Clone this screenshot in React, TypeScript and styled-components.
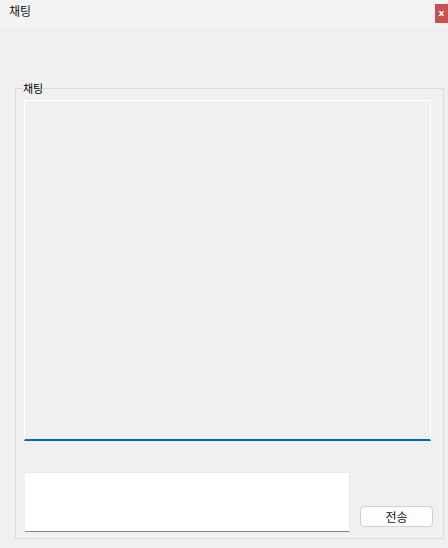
import React from "react";
import styled, { createGlobalStyle } from "styled-components";

const Global = createGlobalStyle`
  html, body { margin: 0; padding: 0; background: #f0f0f0; }
  body { font-family: "Noto Sans CJK KR", "Noto Sans", sans-serif; color: #000; }
  * { box-sizing: border-box; }
`;

const Window = styled.div`
  width: 448px;
  height: 548px;
  display: flex;
  flex-direction: column;
  background: #f0f0f0;
`;

const TitleBar = styled.div`
  height: 27px;
  flex: none;
  display: flex;
  justify-content: space-between;
  align-items: flex-start;
  background: #f3f3f3;
`;

const Title = styled.span`
  margin: 3px 0 0 9px;
  font-size: 12px;
  line-height: 16px;
  color: #111;
`;

const CloseButton = styled.button`
  margin-top: 4px;
  width: 13px;
  height: 19px;
  padding: 0;
  border: none;
  background: #c75050;
  color: #fff;
  font-family: "DejaVu Sans", sans-serif;
  font-size: 9px;
  font-weight: bold;
  line-height: 19px;
  text-align: center;
`;

const Body = styled.div`
  flex: 1;
  display: flex;
  flex-direction: column;
  padding: 55px 4px 9px 15px;
`;

const Group = styled.fieldset`
  flex: 1;
  margin: 0;
  min-width: 0;
  display: flex;
  flex-direction: column;
  gap: 31px;
  padding: 6px 12px 6px 8px;
  border: 1px solid #dcdcdc;
`;

const Legend = styled.legend`
  margin-left: -1px;
  padding: 0;
  font-size: 11px;
  line-height: 12px;
  color: #000;
`;

const ChatLog = styled.div`
  flex: 1;
  border: 1px solid #ffffff;
  border-bottom: 2px solid #0067c0;
  background: #f0f0f0;
`;

const InputRow = styled.div`
  height: 60px;
  flex: none;
  display: flex;
  align-items: flex-end;
  justify-content: space-between;
`;

const MessageInput = styled.div`
  margin-left: 1px;
  width: 325px;
  height: 60px;
  background: #ffffff;
  border-top: 1px solid #ebebeb;
  border-right: 1px solid #ebebeb;
  border-bottom: 1px solid #868686;
`;

const SendButton = styled.button`
  width: 73px;
  height: 21px;
  margin: 0 -2px 5px 0;
  padding: 0;
  border: 1px solid #d0d0d0;
  border-radius: 4px;
  background: #fdfdfd;
  font-family: "Noto Sans CJK KR", sans-serif;
  font-size: 12px;
  line-height: 18px;
  color: #111;
`;

export default function App() {
  return (
    <>
      <Global />
      <Window>
        <TitleBar>
          <Title>채팅</Title>
          <CloseButton>x</CloseButton>
        </TitleBar>
        <Body>
          <Group>
            <Legend>채팅</Legend>
            <ChatLog />
            <InputRow>
              <MessageInput />
              <SendButton>전송</SendButton>
            </InputRow>
          </Group>
        </Body>
      </Window>
    </>
  );
}
